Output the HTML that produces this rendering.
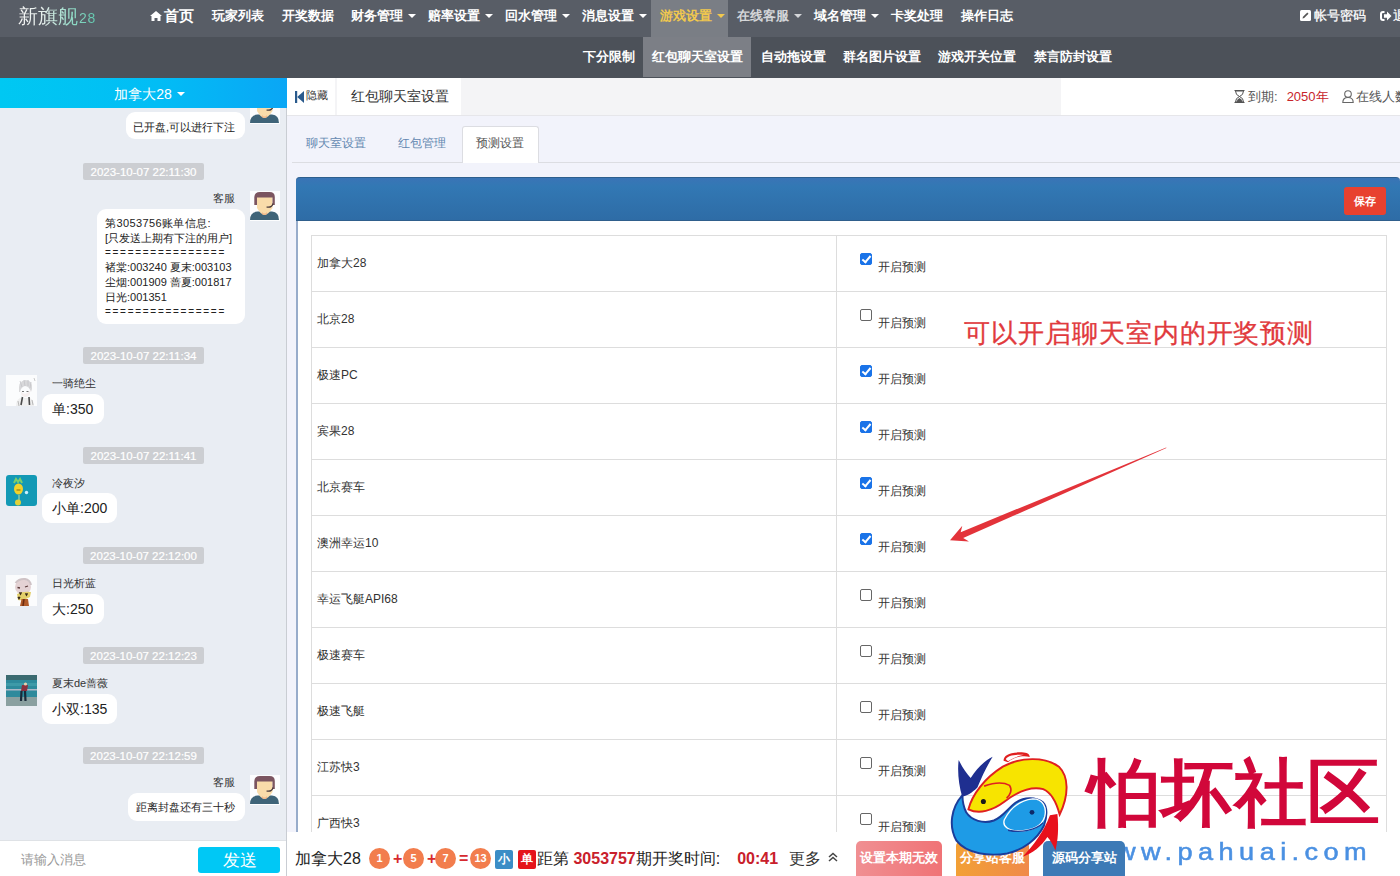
<!DOCTYPE html>
<html><head><meta charset="utf-8">
<style>
*{box-sizing:border-box;margin:0;padding:0}
html,body{width:1400px;height:876px;overflow:hidden;background:#f2f3f8;font-family:"Liberation Sans",sans-serif;color:#333}
.abs{position:absolute}
#nav1{position:absolute;left:0;top:0;width:1400px;height:37px;background:#585d66}
#nav2{position:absolute;left:0;top:37px;width:1400px;height:41px;background:#4c5159}
.ni{position:absolute;top:0;height:37px;line-height:32px;font-size:13px;font-weight:bold;color:#fff;white-space:nowrap}
.n2{position:absolute;top:0;height:40px;line-height:40px;font-size:13px;font-weight:bold;color:#fff;white-space:nowrap}
.caret{display:inline-block;width:0;height:0;border-left:4px solid transparent;border-right:4px solid transparent;border-top:4px solid #fff;vertical-align:middle;margin-left:5px;position:relative;top:-1px}
#chat{position:absolute;left:0;top:78px;width:287px;height:798px;background:#e9edf3;border-right:1px solid #c9cdd3}
#chathead{position:absolute;left:0;top:0;width:287px;height:30px;padding-left:12px;background:linear-gradient(90deg,#00c8f2 0%,#02bdf5 55%,#0aa6f5 100%);color:#fff;font-size:14px;line-height:32px;text-align:center;z-index:2}
.ts{position:absolute;left:83px;width:121px;height:17px;background:#ccced2;color:#fff;font-size:11.5px;line-height:19px;-webkit-text-stroke:0.2px #fff;text-align:center;border-radius:2px}
.bub{position:absolute;background:#fff;border-radius:9px;font-size:12px;color:#222;white-space:nowrap}
.nm{position:absolute;font-size:11px;color:#333;white-space:nowrap}
.av{position:absolute;width:30px;height:30px;overflow:hidden}
#right{position:absolute;left:287px;top:78px;width:1113px;height:798px;background:#f2f3fb}
table{border-collapse:collapse}
.ball{position:absolute;top:16px;width:21px;height:21px;border-radius:50%;background:#f27d4d;color:#fff;font-size:11px;font-weight:bold;line-height:21px;text-align:center}
.op{position:absolute;top:16px;font-size:16px;font-weight:bold;line-height:21px;color:#d62a2f}
.tag{position:absolute;top:18px;width:18px;height:19px;color:#fff;font-size:12px;font-weight:bold;line-height:19px;text-align:center;border-radius:2px}
.btn{position:absolute;top:9px;height:40px;border-radius:5px;color:#fff;font-size:12.7px;font-weight:bold;line-height:35px;text-align:center;white-space:nowrap}

.tr{position:absolute;left:0;width:1076px;height:57px;border:1px solid #dddddd}
.td1{position:absolute;left:5px;top:19px;font-size:12px;line-height:17px;color:#333;white-space:nowrap}
.td2{position:absolute;left:524px;top:0;width:1px;height:55px;background:#dddddd}
.td2 .cb{position:absolute;left:24px;top:17px;width:12px;height:12px;border:1px solid #666;border-radius:2px;background:#fff}
.td2 .cb.on{background:#1a73e8;border-color:#1a73e8}
.td2 .cb.on::after{content:"";position:absolute;left:3px;top:0px;width:3px;height:7px;border:solid #fff;border-width:0 2px 2px 0;transform:rotate(40deg)}
.td2 .lbl{position:absolute;left:42px;top:23px;font-size:12px;line-height:16px;color:#333;white-space:nowrap}

.kf{background:#fff}
.kf::before{content:"";position:absolute;left:6px;top:3px;width:18px;height:10px;background:#7a5a58;border-radius:9px 9px 2px 2px}
.kf::after{content:"";position:absolute;left:3px;top:19px;width:24px;height:10px;background:#4a6a80;border-radius:10px 10px 3px 3px}
.kface{position:absolute;left:8px;top:7px;width:14px;height:14px;background:#f6d2a6;border-radius:0 0 6px 6px}

</style></head><body>
<div id="nav1">
  <div class="abs" style="left:18px;top:4px;font-size:20px;line-height:24px;white-space:nowrap;background:linear-gradient(90deg,#f4f4f4 0px,#e6efec 25px,#8fd9c5 55px,#5cc8ad 80px);-webkit-background-clip:text;background-clip:text;color:transparent">新旗舰<span style="font-size:14px;letter-spacing:0.8px;margin-left:1px">28</span></div>
  <div class="ni" style="left:150px;font-size:15px"><svg width="12" height="10" viewBox="0 0 12 10" style="vertical-align:0px;margin-right:2px"><path d="M6 0 L12 5 L10.5 5 L10.5 10 L7.5 10 L7.5 7 L4.5 7 L4.5 10 L1.5 10 L1.5 5 L0 5 Z" fill="#fff"/></svg>首页</div>
  <div class="ni" style="left:212px">玩家列表</div>
  <div class="ni" style="left:282px">开奖数据</div>
  <div class="ni" style="left:351px">财务管理<span class="caret"></span></div>
  <div class="ni" style="left:428px">赔率设置<span class="caret"></span></div>
  <div class="ni" style="left:505px">回水管理<span class="caret"></span></div>
  <div class="ni" style="left:582px">消息设置<span class="caret"></span></div>
  <div class="abs" style="left:651px;top:0;width:77px;height:37px;background:#7a7e85"></div>
  <div class="ni" style="left:660px;color:#f1c84e">游戏设置<span class="caret" style="border-top-color:#f1c84e"></span></div>
  <div class="ni" style="left:737px;color:#d4d6d9">在线客服<span class="caret" style="border-top-color:#d4d6d9"></span></div>
  <div class="ni" style="left:814px">域名管理<span class="caret"></span></div>
  <div class="ni" style="left:891px">卡奖处理</div>
  <div class="ni" style="left:961px">操作日志</div>
  <svg class="abs" style="left:1300px;top:10px" width="11" height="11" viewBox="0 0 11 11"><rect x="0" y="0" width="11" height="11" rx="1.5" fill="#fff"/><path d="M2.5 8.5 L3 6.8 L7.3 2.5 L8.5 3.7 L4.2 8 Z" fill="#555"/></svg><div class="ni" style="left:1314px;font-weight:normal;font-size:12.7px;-webkit-text-stroke:0.25px #fff">帐号密码</div>
  <svg class="abs" style="left:1380px;top:11px" width="12" height="10" viewBox="0 0 12 10"><path d="M4.5 1 H3 Q1 1 1 3 V7 Q1 9 3 9 H4.5" fill="none" stroke="#fff" stroke-width="2"/><path d="M4 3.3 H7 V0.5 L11.5 5 L7 9.5 V6.7 H4 Z" fill="#fff"/></svg><div class="ni" style="left:1393px;font-weight:normal;font-size:12.7px;-webkit-text-stroke:0.25px #fff">退出</div>
</div>
<div id="nav2">
  <div class="n2" style="left:583px">下分限制</div>
  <div class="abs" style="left:643px;top:0;width:108px;height:40px;background:#7c7f86"></div>
  <div class="n2" style="left:652px">红包聊天室设置</div>
  <div class="n2" style="left:761px">自动拖设置</div>
  <div class="n2" style="left:843px">群名图片设置</div>
  <div class="n2" style="left:938px">游戏开关位置</div>
  <div class="n2" style="left:1034px">禁言防封设置</div>
</div>
<div id="chat">
  <div id="chathead">加拿大28<span class="caret"></span></div>
  <!-- msg1 -->
  <div class="av" style="left:250px;top:16px"><svg width="30" height="30" viewBox="0 0 30 30"><rect width="30" height="30" fill="#fcfdfe"/><path d="M0 29 Q0 21 7.5 20.5 L22 20.5 Q29 21 29 29 Z" fill="#3f6478"/><path d="M7 6 L22.5 6 L22.5 17 Q18 24 14.5 24 Q11 24 7 17 Z" fill="#f9dcaa"/><path d="M12 21 Q14.5 24 17 21 L17 23 Q14.5 25 12 23Z" fill="#f3b98a"/><path d="M4.3 14 L4.3 6 Q4.7 1 10 1 L19.5 1 Q24.8 1 24.8 6 L24.8 14 L22.5 14 L22.5 6.5 L7 6.5 L7 14 Z" fill="#7b5560"/><path d="M23 12.5 Q22 17 16.5 16" fill="none" stroke="#4a3a3a" stroke-width="1.2"/></svg></div>
  <div class="bub" style="left:126px;top:34px;width:119px;height:27px;line-height:30px;padding-left:7px;font-size:11px">已开盘,可以进行下注</div>
  <div class="ts" style="top:85px">2023-10-07 22:11:30</div>
  <div class="nm" style="right:51px;top:113px;line-height:14px">客服</div>
  <div class="av" style="left:250px;top:113px"><svg width="30" height="30" viewBox="0 0 30 30"><rect width="30" height="30" fill="#fcfdfe"/><path d="M0 29 Q0 21 7.5 20.5 L22 20.5 Q29 21 29 29 Z" fill="#3f6478"/><path d="M7 6 L22.5 6 L22.5 17 Q18 24 14.5 24 Q11 24 7 17 Z" fill="#f9dcaa"/><path d="M12 21 Q14.5 24 17 21 L17 23 Q14.5 25 12 23Z" fill="#f3b98a"/><path d="M4.3 14 L4.3 6 Q4.7 1 10 1 L19.5 1 Q24.8 1 24.8 6 L24.8 14 L22.5 14 L22.5 6.5 L7 6.5 L7 14 Z" fill="#7b5560"/><path d="M23 12.5 Q22 17 16.5 16" fill="none" stroke="#4a3a3a" stroke-width="1.2"/></svg></div>
  <div class="bub" style="left:97px;top:131px;width:148px;height:115px;padding:7px 0 0 8px;font-size:11px;line-height:14.7px"><span style="letter-spacing:0.4px">第3053756账单信息:</span><br>[只发送上期有下注的用户]<br><span style="letter-spacing:1.72px;font-size:10px;vertical-align:top;position:relative;top:1px">================</span><br>褚棠:003240 夏末:003103<br>尘烟:001909 蔷夏:001817<br>日光:001351<br><span style="letter-spacing:1.72px;font-size:10px;vertical-align:top;position:relative;top:1px">================</span></div>
  <div class="ts" style="top:269px">2023-10-07 22:11:34</div>
  <div class="av" style="left:6px;top:297px;width:31px;height:31px"><svg width="31" height="31" viewBox="0 0 31 31"><rect width="31" height="31" fill="#fbfcfd"/><path d="M13 17 Q12 6 19 5 Q27 5 26 14 L25 17 Q23 11 19 11 Q15 12 14 17Z" fill="#d8d8da"/><path d="M14 6 L16 12 M18 5 L19 11 M22 5 L22 11 M25 7 L24 13" stroke="#c4c4c8" stroke-width="0.8"/><path d="M14.5 16 Q19 22 24.5 15 L23.5 20 Q19 24 15.5 20Z" fill="#f6efef"/><path d="M16 16.5 L18 16.5 M20.5 16.5 L22.5 16.5" stroke="#666" stroke-width="0.9"/><path d="M10 31 Q10 25 14 23 L24 23 Q28 25 28 31Z" fill="#efefef"/><path d="M16.5 22 L15 30 M23 22 L23.5 30" stroke="#4a4a4a" stroke-width="1.6"/><path d="M12 26 L13 31 M26 25 L27 30" stroke="#aaa" stroke-width="0.8"/><path d="M28 3 L29 6" stroke="#bbb" stroke-width="0.8"/></svg></div>
  <div class="nm" style="left:52px;top:298px;line-height:14px">一骑绝尘</div>
  <div class="bub" style="left:42px;top:316px;width:62px;height:30px;line-height:30px;padding-left:10px;font-size:14px">单:350</div>
  <div class="ts" style="top:369px">2023-10-07 22:11:41</div>
  <div class="av" style="left:6px;top:397px;width:31px;height:31px"><svg width="31" height="31" viewBox="0 0 31 31"><rect width="31" height="31" rx="3" fill="#1399b5"/><path d="M8 8 L10 4 L12 7 L14 4 L16 8" stroke="#7ccf6a" stroke-width="2" fill="none"/><ellipse cx="12.5" cy="14" rx="4.5" ry="5.5" fill="#f2d22a"/><path d="M10.5 15 L14.5 15" stroke="#8a6a10" stroke-width="1"/><circle cx="20.5" cy="17.5" r="1.7" fill="#c8f0ff"/><path d="M13 20 L13 26" stroke="#bfe0a0" stroke-width="1"/><ellipse cx="12" cy="27.5" rx="3" ry="3" fill="#e0d23a"/></svg></div>
  <div class="nm" style="left:52px;top:398px;line-height:14px">冷夜汐</div>
  <div class="bub" style="left:42px;top:415px;width:75px;height:30px;line-height:30px;padding-left:10px;font-size:14px">小单:200</div>
  <div class="ts" style="top:469px">2023-10-07 22:12:00</div>
  <div class="av" style="left:6px;top:497px;width:31px;height:31px"><svg width="31" height="31" viewBox="0 0 31 31"><rect width="31" height="31" fill="#fbfcfd"/><ellipse cx="17" cy="12" rx="8" ry="7.5" fill="#e4d2d4"/><path d="M9.5 8 Q13 3.5 19 4 Q24 5 25 10" fill="none" stroke="#cfc3c6" stroke-width="2"/><path d="M11.5 12.5 L14 13 M19 12 L22 11" stroke="#5a3a3a" stroke-width="1.3"/><path d="M11 19 Q17 16 25 17 L24 22 Q18 26 12 25 Z" fill="#e3cf6a"/><path d="M13.5 17.5 l1 1 l1 -1 l-1 1.8 z M19.5 18.5 l1 1 l1 -1 l-1 1.8z M12 22 l1 1 l1 -1 l-1 1.8z" stroke="#3a2a1a" stroke-width="1.2" fill="#3a2a1a"/><path d="M14 31 L15.5 24 L22 24 L23 31Z" fill="#b05a28"/><path d="M18 24 L17 31" stroke="#6a2a10" stroke-width="1.5"/></svg></div>
  <div class="nm" style="left:52px;top:498px;line-height:14px">日光析蓝</div>
  <div class="bub" style="left:42px;top:516px;width:62px;height:30px;line-height:30px;padding-left:10px;font-size:14px">大:250</div>
  <div class="ts" style="top:569px">2023-10-07 22:12:23</div>
  <div class="av" style="left:6px;top:597px;width:31px;height:31px"><svg width="31" height="31" viewBox="0 0 31 31"><defs></defs><rect width="31" height="31" rx="3" fill="#2e8a9c"/><rect y="0" width="31" height="5" fill="#3a6a70"/><rect y="8" width="31" height="3" fill="#3e9aa8"/><rect y="14" width="31" height="1.5" fill="#b0b8c8"/><rect y="22" width="31" height="9" fill="#8aa0a0"/><path d="M16 10 L22 10 L21 16 L15 16Z" fill="#8a3040"/><circle cx="19.5" cy="9" r="1.6" fill="#e8d0b0"/><path d="M15.5 16 L15 26 M19 16 L19.5 26" stroke="#1a2a3a" stroke-width="2.2"/></svg></div>
  <div class="nm" style="left:52px;top:598px;line-height:14px">夏末de蔷薇</div>
  <div class="bub" style="left:42px;top:616px;width:75px;height:30px;line-height:30px;padding-left:10px;font-size:14px">小双:135</div>
  <div class="ts" style="top:669px">2023-10-07 22:12:59</div>
  <div class="nm" style="right:51px;top:697px;line-height:14px">客服</div>
  <div class="av" style="left:250px;top:697px"><svg width="30" height="30" viewBox="0 0 30 30"><rect width="30" height="30" fill="#fcfdfe"/><path d="M0 29 Q0 21 7.5 20.5 L22 20.5 Q29 21 29 29 Z" fill="#3f6478"/><path d="M7 6 L22.5 6 L22.5 17 Q18 24 14.5 24 Q11 24 7 17 Z" fill="#f9dcaa"/><path d="M12 21 Q14.5 24 17 21 L17 23 Q14.5 25 12 23Z" fill="#f3b98a"/><path d="M4.3 14 L4.3 6 Q4.7 1 10 1 L19.5 1 Q24.8 1 24.8 6 L24.8 14 L22.5 14 L22.5 6.5 L7 6.5 L7 14 Z" fill="#7b5560"/><path d="M23 12.5 Q22 17 16.5 16" fill="none" stroke="#4a3a3a" stroke-width="1.2"/></svg></div>
  <div class="bub" style="left:128px;top:715px;width:117px;height:28px;line-height:28px;padding-left:8px;font-size:11px">距离封盘还有三十秒</div>
  <div class="abs" style="left:0;top:762px;width:286px;height:36px;background:#fff;border-top:1px solid #dfe2e6"></div>
  <div class="abs" style="left:21px;top:774px;font-size:12.8px;line-height:15px;color:#999">请输入消息</div>
  <div class="abs" style="left:198px;top:769px;width:82px;height:26px;background:#00c8f5;border-radius:3px;color:#fff;font-size:17px;line-height:27px;text-align:center;padding-left:2px">发送</div>
</div>
<div id="right">
  <div class="abs" style="left:0;top:0;width:1113px;height:38px;background:#f4f4f6;border-bottom:1px solid #e6e6ea"></div>
  <div class="abs" style="left:0;top:0;width:48px;height:37px;background:#fff"></div>
  <div class="abs" style="left:50px;top:0;width:124px;height:37px;background:#fff"></div>
  <div class="abs" style="left:774px;top:0;width:339px;height:38px;background:#fff;border-bottom:1px solid #e6e6ea"></div>
  <svg class="abs" style="left:8px;top:13px" width="10" height="12" viewBox="0 0 10 12"><rect x="0" y="0" width="2.2" height="12" fill="#2a5a8c"/><path d="M9 0 L2.2 6 L9 12 Z" fill="#2a5a8c"/></svg>
  <div class="abs" style="left:19px;top:10px;font-size:11px;line-height:15px;color:#333">隐藏</div>
  <div class="abs" style="left:64px;top:10px;font-size:13.7px;line-height:17px;color:#333">红包聊天室设置</div>
  <div class="abs" style="left:947px;top:10px;font-size:13px;line-height:17px;color:#555;white-space:nowrap"><svg width="11" height="13" viewBox="0 0 11 13" style="vertical-align:-2px;margin-right:3px"><path d="M0.5 0.5 H10.5 M0.5 12.5 H10.5" stroke="#555" stroke-width="1.2"/><path d="M1.5 1 Q1.5 5 5.5 6.5 Q9.5 5 9.5 1 Z M1.5 12 Q1.5 8 5.5 6.5 Q9.5 8 9.5 12 Z" fill="none" stroke="#555" stroke-width="1"/><path d="M2.5 12 Q3 9 5.5 8 Q8 9 8.5 12Z" fill="#555"/></svg>到期:<span style="color:#c8242b;margin-left:9px">2050年</span><svg width="12" height="13" viewBox="0 0 12 13" style="vertical-align:-2px;margin-left:13px;margin-right:2px"><circle cx="6" cy="4" r="3.3" fill="none" stroke="#666" stroke-width="1.1"/><path d="M0.8 12.5 Q0.8 7.5 6 7.5 Q11.2 7.5 11.2 12.5 Z" fill="none" stroke="#666" stroke-width="1.1"/></svg>在线人数</div>
  <!-- tabs -->
  <div class="abs" style="left:5px;top:84px;width:1108px;height:1px;background:#dcdde2"></div>
  <div class="abs" style="left:19px;top:58px;font-size:12px;line-height:15px;color:#6287b0">聊天室设置</div>
  <div class="abs" style="left:111px;top:58px;font-size:12px;line-height:15px;color:#6287b0">红包管理</div>
  <div class="abs" style="left:175px;top:48px;width:77px;height:37px;background:#fff;border:1px solid #dcdde2;border-bottom:none;border-radius:3px 3px 0 0"></div>
  <div class="abs" style="left:189px;top:58px;font-size:12px;line-height:15px;color:#555">预测设置</div>
  <!-- panel -->
  <div class="abs" style="left:9px;top:99px;width:1104px;height:700px;background:#fff;border-left:2px solid #98accb;border-radius:4px 4px 0 0"></div>
  <div class="abs" style="left:9px;top:99px;width:1104px;height:44px;background:linear-gradient(#3a74b6,#3278b4 20%,#2e6ca6);border-top:1px solid #2d5f8e;border-bottom:1px solid #2f5f8c;border-radius:4px 4px 0 0"></div>
  <div class="abs" style="left:1057px;top:109px;width:42px;height:28px;background:#e8412f;border-radius:3px;color:#fff;font-weight:bold;font-size:11px;line-height:28px;text-align:center">保存</div>
  <div id="tbl" class="abs" style="left:24px;top:157px;width:1076px;height:700px">
<div class="tr" style="top:0px"><div class="td1">加拿大28</div><div class="td2"><span class="cb on"></span><span class="lbl">开启预测</span></div></div>
<div class="tr" style="top:56px"><div class="td1">北京28</div><div class="td2"><span class="cb"></span><span class="lbl">开启预测</span></div></div>
<div class="tr" style="top:112px"><div class="td1">极速PC</div><div class="td2"><span class="cb on"></span><span class="lbl">开启预测</span></div></div>
<div class="tr" style="top:168px"><div class="td1">宾果28</div><div class="td2"><span class="cb on"></span><span class="lbl">开启预测</span></div></div>
<div class="tr" style="top:224px"><div class="td1">北京赛车</div><div class="td2"><span class="cb on"></span><span class="lbl">开启预测</span></div></div>
<div class="tr" style="top:280px"><div class="td1">澳洲幸运10</div><div class="td2"><span class="cb on"></span><span class="lbl">开启预测</span></div></div>
<div class="tr" style="top:336px"><div class="td1">幸运飞艇API68</div><div class="td2"><span class="cb"></span><span class="lbl">开启预测</span></div></div>
<div class="tr" style="top:392px"><div class="td1">极速赛车</div><div class="td2"><span class="cb"></span><span class="lbl">开启预测</span></div></div>
<div class="tr" style="top:448px"><div class="td1">极速飞艇</div><div class="td2"><span class="cb"></span><span class="lbl">开启预测</span></div></div>
<div class="tr" style="top:504px"><div class="td1">江苏快3</div><div class="td2"><span class="cb"></span><span class="lbl">开启预测</span></div></div>
<div class="tr" style="top:560px"><div class="td1">广西快3</div><div class="td2"><span class="cb"></span><span class="lbl">开启预测</span></div></div>
  </div>
</div>

<svg class="abs" style="left:0;top:0;z-index:5;pointer-events:none" width="1400" height="876"><polygon points="950.0,540.3 962.3,525.8 960.7,532.2 1031.9,502.9 1166.2,447.4 1166.4,448.0 1033.6,506.9 963.2,538.1 969.0,541.4" fill="#e3333a"/></svg>
<div class="abs" style="left:964px;top:316px;font-size:26.2px;line-height:34px;color:#e13a3d;white-space:nowrap;z-index:5;letter-spacing:0.95px;-webkit-text-stroke:0.3px #e13a3d">可以开启聊天室内的开奖预测</div>
<div id="bbar" class="abs" style="left:287px;top:832px;width:1113px;height:44px;background:#fff;z-index:3">
  <div class="abs" style="left:8px;top:17px;font-size:16px;line-height:19px;color:#222;white-space:nowrap">加拿大28</div>
  <div class="ball" style="left:82px">1</div><div class="op" style="left:106px">+</div>
  <div class="ball" style="left:116px">5</div><div class="op" style="left:140px">+</div>
  <div class="ball" style="left:148px">7</div><div class="op" style="left:172px">=</div>
  <div class="ball" style="left:183px">13</div>
  <div class="tag" style="left:208px;background:#3b8dc6">小</div>
  <div class="tag" style="left:231px;background:#e5141b">单</div>
  <div class="abs" style="left:250px;top:17px;font-size:16px;line-height:19px;color:#222;white-space:nowrap">距第 <b style="color:#c9202b">3053757</b>期开奖时间:<b style="color:#c9202b;margin-left:17px">00:41</b></div>
  <div class="abs" style="left:502px;top:17px;font-size:16px;line-height:19px;color:#333;white-space:nowrap">更多</div>
  <svg class="abs" style="left:541px;top:20px" width="10" height="10" viewBox="0 0 10 10"><path d="M1 5 L5 1.5 L9 5 M1 9 L5 5.5 L9 9" fill="none" stroke="#444" stroke-width="1.5"/></svg>
  <div class="btn" style="left:569px;width:86px;background:linear-gradient(90deg,#f08f92,#f07376)">设置本期无效</div>
  <div class="btn" style="left:669px;width:73px;background:linear-gradient(90deg,#f2a035,#f08a4a)">分享站客服</div>
  <div class="abs" style="left:804px;top:5px;font-size:23px;line-height:30px;color:#4a90e2;letter-spacing:4.6px;white-space:nowrap;-webkit-text-stroke:0.5px #4a90e2;transform:scaleX(1.18);transform-origin:0 0">www.pahuai.com</div>
  <div class="btn" style="left:756px;width:82px;background:#3d7ab6">源码分享站</div>
</div>

<svg class="abs" style="left:940px;top:745px;z-index:6" width="140" height="131" viewBox="0 0 936 876">
  <path d="M150 335 C 75 420 55 540 110 640 C 180 730 330 745 450 725 C 560 700 650 630 695 540 C 720 470 715 410 690 385 C 640 345 560 345 500 390 C 450 430 420 480 360 505 C 290 530 210 505 175 450 C 160 420 150 380 150 335 Z" fill="#1e9be6" stroke="#1b3d9a" stroke-width="13"/>
  <path d="M430 500 C 470 420 540 370 620 360 C 690 360 715 420 700 480 C 680 545 610 575 520 575 C 460 572 415 545 430 500 Z" fill="#1e9be6" stroke="#fff" stroke-width="9"/>
  <path d="M455 570 C 540 590 640 570 690 520" fill="none" stroke="#1b3d9a" stroke-width="9"/>
  <circle cx="615" cy="450" r="16" fill="#0d2a6a"/>
  <path d="M125 100 C 150 150 175 190 205 220 C 245 160 290 110 352 78 C 315 140 280 210 250 285 C 215 320 175 345 148 345 C 125 270 115 170 125 100 Z" fill="#1f2f90"/>
  <path d="M190 430 C 215 330 300 220 420 145 C 540 80 700 75 795 145 C 860 210 865 330 800 465 C 780 390 750 320 690 295 C 610 275 520 310 430 380 C 350 440 260 465 190 430 Z" fill="#f7e400" stroke="#e02020" stroke-width="13"/>
  <path d="M295 275 C 350 255 420 245 465 270 C 485 300 470 335 445 355" fill="none" stroke="#e02020" stroke-width="11"/>
  <circle cx="290" cy="378" r="17" fill="#1a1a1a"/>
  <path d="M425 105 C 425 65 470 45 560 50 C 590 52 600 65 600 80 C 560 70 500 75 455 115 Z" fill="#e02020"/>
  <path d="M440 95 C 450 70 500 62 560 65 C 520 75 480 90 455 108 Z" fill="#fff"/>
  <path d="M735 470 L 785 462 C 795 560 788 640 772 705 C 752 660 735 632 718 615 C 675 680 620 722 553 748 C 625 670 695 580 735 470 Z" fill="#e8101c"/>
</svg>
<div class="abs" style="left:1088px;top:749px;-webkit-text-stroke:0px #d1073a;font-family:'Liberation Serif',serif;font-weight:bold;font-size:73px;line-height:90px;color:#d1073a;white-space:nowrap;z-index:6;letter-spacing:0px">怕坏社区</div>
</body></html>
